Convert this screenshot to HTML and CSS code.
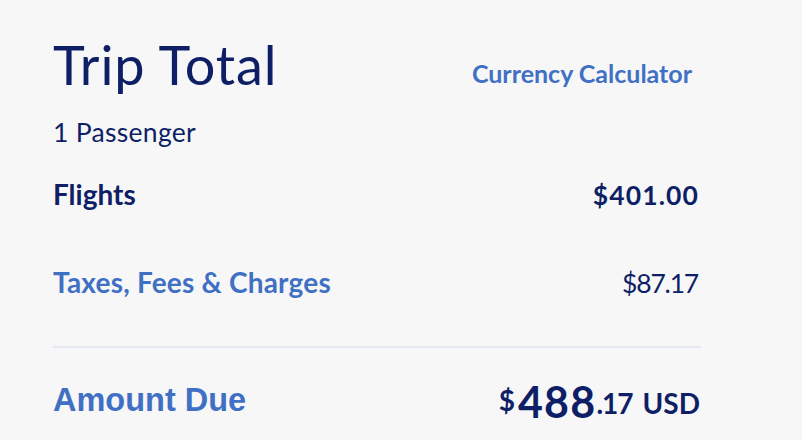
FILE: index.html
```html
<!DOCTYPE html>
<html>
<head>
<meta charset="utf-8">
<link rel="stylesheet" href="styles.css">
</head>
<body>
<div class="summary">
  <div class="head">
    <h1 class="title">Trip Total</h1>
    <a class="calc">Currency Calculator</a>
  </div>
  <div class="pax">1 Passenger</div>
  <div class="row flights">
    <span class="label">Flights</span>
    <span class="amt">$401.00</span>
  </div>
  <div class="row taxes">
    <span class="label link">Taxes, Fees &amp; Charges</span>
    <span class="amt reg">$87.17</span>
  </div>
  <div class="divider"></div>
  <div class="due">
    <span class="due-label">Amount Due</span>
    <div class="total"><span class="cur">$</span><span class="big">488</span><span class="cents">.17</span><span class="usd">USD</span></div>
  </div>
</div>
</body>
</html>
```
FILE: styles.css
```css
html, body {
  margin: 0;
  background: #f7f7f8;
}
body {
  font-family: Lato, "Open Sans", sans-serif;
  color: #0e1f66;
}
.summary {
  width: 648px;
  padding: 35px 0 0 53px;
}
.head {
  display: flex;
  justify-content: space-between;
  align-items: flex-start;
}
.title {
  margin: 0;
  font-weight: 400;
  font-size: 54px;
  line-height: 60px;
  letter-spacing: 0.9px;
}
.calc {
  font-size: 25px;
  line-height: 30px;
  font-weight: 700;
  color: #4070c4;
  margin: 23px 9px 0 0;
}
.pax {
  font-size: 26.5px;
  line-height: 32px;
  letter-spacing: 0.3px;
  margin-top: 21px;
}
.row {
  display: flex;
  justify-content: space-between;
  align-items: baseline;
  font-size: 28px;
  line-height: 34px;
  font-weight: 700;
}
.flights {
  margin-top: 29px;
}
.taxes {
  margin-top: 53px;
}
.amt {
  font-size: 26.5px;
  letter-spacing: 1.1px;
  margin-right: 2px;
}
.label.link {
  color: #4070c4;
  letter-spacing: 0.2px;
}
.amt.reg {
  font-weight: 400;
  font-size: 26.5px;
  letter-spacing: -1.2px;
  margin-right: 3px;
}
.divider {
  height: 2px;
  background: #e3e7f1;
  margin-top: 46px;
}
.due {
  display: flex;
  justify-content: space-between;
  align-items: flex-start;
}
.due-label {
  font-family: "Liberation Sans", Arial, sans-serif;
  font-weight: 700;
  font-size: 32.5px;
  line-height: 40px;
  color: #4070c4;
  margin-top: 32px;
}
.total {
  margin-top: 35px;
  font-size: 28px;
  line-height: 40px;
  font-weight: 700;
  white-space: nowrap;
}
.total span {
  line-height: 0;
}
.cur {
  font-size: 28px;
  vertical-align: 3px;
  margin-right: 3px;
}
.big {
  font-size: 43px;
  letter-spacing: 1.2px;
  vertical-align: -4px;
}
.cents {
  letter-spacing: -1px;
}
.usd {
  margin-left: 10px;
  margin-right: 1px;
}
```
